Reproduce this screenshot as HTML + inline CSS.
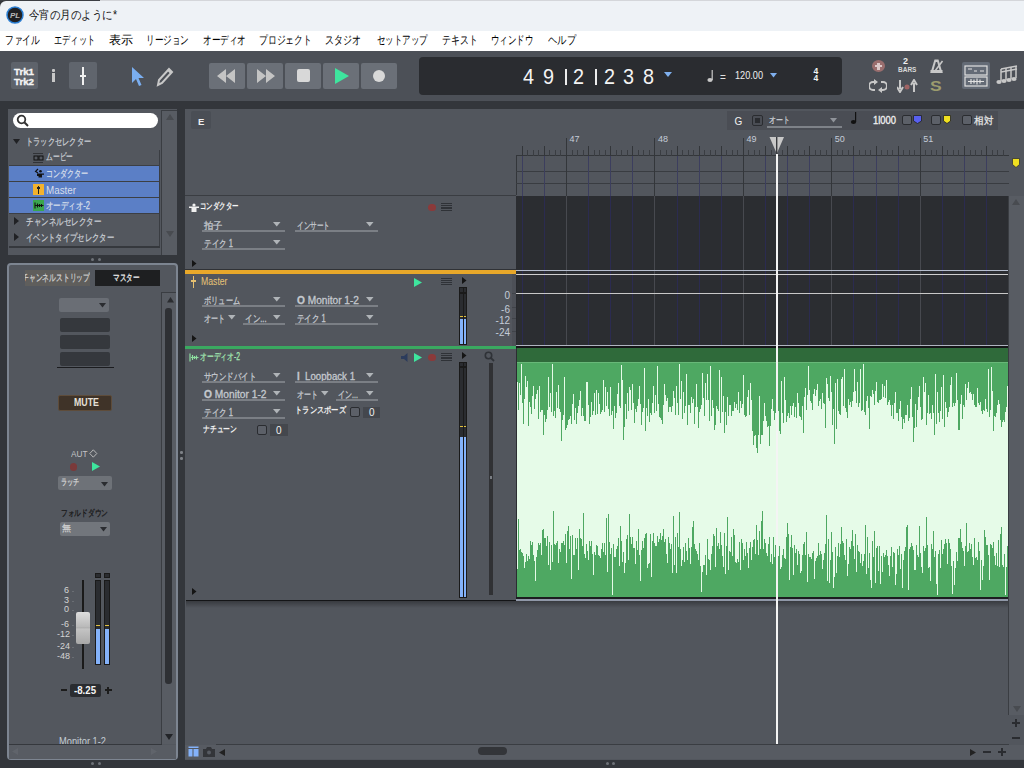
<!DOCTYPE html><html><head><meta charset="utf-8"><style>
*{margin:0;padding:0;box-sizing:border-box}
html,body{width:1024px;height:768px;overflow:hidden;background:#33363b;font-family:"Liberation Sans",sans-serif}
div,svg{position:absolute}
.t{white-space:nowrap;line-height:1}
</style></head><body>
<div style="left:0px;top:0px;width:1024px;height:1px;background:#d4d6da;"></div>
<div style="left:0px;top:0px;width:100px;height:1px;background:#3c3f44;"></div>
<div style="left:0px;top:1px;width:1024px;height:30px;background:#eef2f6;border-top-left-radius:6px;"></div>
<svg style="left:6px;top:6px" width="18" height="18"><circle cx="9" cy="9" r="8" fill="#1f2023" stroke="#2a7fd4" stroke-width="1.5"/><text x="9" y="12" font-size="8" font-weight="bold" font-style="italic" fill="#b8b8b8" text-anchor="middle" font-family="Liberation Sans">PL</text></svg>
<div class="t" id="w1" style="left:29px;top:9px;font-size:12px;color:#111;transform:scaleX(0.874);transform-origin:0 0;">今宵の月のように*</div>
<div style="left:0px;top:31px;width:1024px;height:20px;background:#ffffff;"></div>
<div class="t" id="w2" style="left:5px;top:34px;font-size:12px;color:#000;transform:scaleX(0.729);transform-origin:0 0;">ファイル</div>
<div class="t" id="w3" style="left:54px;top:34px;font-size:12px;color:#000;transform:scaleX(0.683);transform-origin:0 0;">エディット</div>
<div class="t" id="w4" style="left:109px;top:34px;font-size:12px;color:#000;transform:scaleX(1.000);transform-origin:0 0;">表示</div>
<div class="t" id="w5" style="left:146px;top:34px;font-size:12px;color:#000;transform:scaleX(0.717);transform-origin:0 0;">リージョン</div>
<div class="t" id="w6" style="left:202.5px;top:34px;font-size:12px;color:#000;transform:scaleX(0.717);transform-origin:0 0;">オーディオ</div>
<div class="t" id="w7" style="left:258.5px;top:34px;font-size:12px;color:#000;transform:scaleX(0.736);transform-origin:0 0;">プロジェクト</div>
<div class="t" id="w8" style="left:325px;top:34px;font-size:12px;color:#000;transform:scaleX(0.750);transform-origin:0 0;">スタジオ</div>
<div class="t" id="w9" style="left:377px;top:34px;font-size:12px;color:#000;transform:scaleX(0.708);transform-origin:0 0;">セットアップ</div>
<div class="t" id="w10" style="left:442px;top:34px;font-size:12px;color:#000;transform:scaleX(0.740);transform-origin:0 0;">テキスト</div>
<div class="t" id="w11" style="left:491px;top:34px;font-size:12px;color:#000;transform:scaleX(0.708);transform-origin:0 0;">ウィンドウ</div>
<div class="t" id="w12" style="left:547.5px;top:34px;font-size:12px;color:#000;transform:scaleX(0.778);transform-origin:0 0;">ヘルプ</div>
<div style="left:0px;top:51px;width:1024px;height:50px;background:#4c5057;"></div>
<div style="left:11px;top:62px;width:27px;height:27px;background:#5e636b;border-radius:2px;"></div>
<div class="t" id="w13" style="left:14px;top:67px;font-size:9.5px;color:#f4f4f4;transform:scaleX(1.023);transform-origin:0 0;font-weight:bold;-webkit-text-stroke-width:0.35px;">Trk1</div>
<div class="t" id="w14" style="left:14px;top:76.5px;font-size:9.5px;color:#f4f4f4;transform:scaleX(1.023);transform-origin:0 0;font-weight:bold;-webkit-text-stroke-width:0.35px;">Trk2</div>
<div style="left:52px;top:69px;width:3px;height:3px;background:#c8c8c8;border-radius:1px;"></div>
<div style="left:52px;top:73px;width:3px;height:9px;background:#c8c8c8;"></div>
<div style="left:69px;top:62px;width:28px;height:27px;background:#60656d;border-radius:2px;"></div>
<div style="left:82px;top:67px;width:2px;height:18px;background:#f0f0f0;"></div>
<div style="left:80px;top:75px;width:6px;height:2px;background:#f0f0f0;"></div>
<svg style="left:130px;top:66px" width="16" height="22"><path d="M2 1 L2 17 L6 13 L9 20 L11.5 19 L8.5 12 L14 12 Z" fill="#7aaef0"/></svg>
<svg style="left:155px;top:66px" width="20" height="22"><path d="M3 19 L4 14 L14 3 L17 6 L7 17 Z" fill="none" stroke="#c8c8c8" stroke-width="2"/><path d="M13 4 L16 7" stroke="#c8c8c8" stroke-width="2"/></svg>
<div style="left:209px;top:63px;width:36px;height:26px;background:#6b7078;border-radius:2px;"></div>
<div style="left:247px;top:63px;width:36px;height:26px;background:#6b7078;border-radius:2px;"></div>
<div style="left:285px;top:63px;width:36px;height:26px;background:#6b7078;border-radius:2px;"></div>
<div style="left:323px;top:63px;width:36px;height:26px;background:#6b7078;border-radius:2px;"></div>
<div style="left:361px;top:63px;width:36px;height:26px;background:#6b7078;border-radius:2px;"></div>
<svg style="left:209px;top:63px" width="36" height="26"><path d="M8 13 L17 6 L17 20 Z M17 13 L26 6 L26 20 Z" fill="#c4c4c4"/></svg>
<svg style="left:247px;top:63px" width="36" height="26"><path d="M28 13 L19 6 L19 20 Z M19 13 L10 6 L10 20 Z" fill="#c4c4c4"/></svg>
<div style="left:297px;top:69px;width:13px;height:13px;background:#d8d8d8;border-radius:2px;"></div>
<svg style="left:323px;top:63px" width="36" height="26"><path d="M12 5 L26 13 L12 21 Z" fill="#3ee59e"/></svg>
<div style="left:373px;top:70px;width:12px;height:12px;background:#d8d8d8;border-radius:50%;"></div>
<div style="left:419px;top:57px;width:423px;height:38px;background:#2a2c30;border-radius:4px;"></div>
<div class="t" style="left:523.2px;top:65.5px;font-size:22px;color:#f4f4f4;transform:scaleX(0.9);transform-origin:0 0;">4</div>
<div class="t" style="left:543.2px;top:65.5px;font-size:22px;color:#f4f4f4;transform:scaleX(0.9);transform-origin:0 0;">9</div>
<div class="t" style="left:573.2px;top:65.5px;font-size:22px;color:#f4f4f4;transform:scaleX(0.9);transform-origin:0 0;">2</div>
<div class="t" style="left:604.2px;top:65.5px;font-size:22px;color:#f4f4f4;transform:scaleX(0.9);transform-origin:0 0;">2</div>
<div class="t" style="left:623.2px;top:65.5px;font-size:22px;color:#f4f4f4;transform:scaleX(0.9);transform-origin:0 0;">3</div>
<div class="t" style="left:643.2px;top:65.5px;font-size:22px;color:#f4f4f4;transform:scaleX(0.9);transform-origin:0 0;">8</div>
<div style="left:564.5px;top:69px;width:2px;height:15.5px;background:#ececec;"></div>
<div style="left:594.5px;top:69px;width:2px;height:15.5px;background:#ececec;"></div>
<svg style="left:664px;top:72px" width="8" height="6"><path d="M0 0 L8 0 L4 5 Z" fill="#7fb0ee"/></svg>
<svg style="left:705px;top:69px" width="10" height="14"><ellipse cx="5" cy="11" rx="2.6" ry="2" fill="#c8c8c8"/><rect x="6.6" y="1" width="1.2" height="10" fill="#c8c8c8"/></svg>
<div class="t" style="left:720px;top:72.5px;font-size:10px;color:#e0e0e0;">=</div>
<div class="t" id="w15" style="left:734.5px;top:71px;font-size:10px;color:#f0f0f0;transform:scaleX(0.915);transform-origin:0 0;">120.00</div>
<svg style="left:770px;top:73px" width="8" height="5"><path d="M0 0 L7 0 L3.5 4.5 Z" fill="#7fb0ee"/></svg>
<div class="t" style="left:813.5px;top:67px;font-size:8.5px;color:#f4f4f4;font-weight:bold;">4</div>
<div class="t" style="left:813.5px;top:74px;font-size:8.5px;color:#f4f4f4;font-weight:bold;">4</div>
<div style="left:872px;top:60px;width:13px;height:12px;background:#9a6e6e;border-radius:50%;"></div>
<div style="left:877.2px;top:62.5px;width:2.6px;height:7px;background:#dccaca;"></div>
<div style="left:875px;top:64.7px;width:7px;height:2.6px;background:#dccaca;"></div>
<div class="t" style="left:903px;top:57px;font-size:9px;color:#f0f0f0;font-weight:bold;">2</div>
<div class="t" style="left:898px;top:67px;font-size:6.5px;color:#d8d8d8;font-weight:bold;">BARS</div>
<svg style="left:929px;top:58px" width="16" height="16"><path d="M1.5 15 L5.5 1.5 L9.5 1.5 L13.5 15 Z" fill="#c8c8c8"/><path d="M4.5 12 L6.8 4 L8.2 4 L10.5 12 Z" fill="#4c5057"/><path d="M6 13 L13.5 3" stroke="#c8c8c8" stroke-width="1.6"/><rect x="1.5" y="12" width="12" height="3" fill="#c8c8c8"/></svg>
<svg style="left:869px;top:79px" width="18" height="14"><path d="M7 3 L4 3 A4 4 0 0 0 4 11 L6 11 M11 11 L14 11 A4 4 0 0 0 14 3 L12 3" fill="none" stroke="#c8c8c8" stroke-width="2"/><path d="M5 0 L9 3 L5 6 Z M13 8 L9 11 L13 14 Z" fill="#c8c8c8"/></svg>
<svg style="left:897px;top:79px" width="22" height="14"><path d="M3 1 L3 10 M0 8 L3 13 L6 8" stroke="#c8c8c8" stroke-width="2" fill="none"/><circle cx="10" cy="8" r="2.5" fill="#a06464"/><path d="M17 13 L17 4 M14 6 L17 1 L20 6" stroke="#c8c8c8" stroke-width="2" fill="none"/></svg>
<div class="t" style="left:929.5px;top:79px;font-size:14px;color:#9c9c6e;font-weight:bold;transform:scaleX(1.25);transform-origin:0 0;">S</div>
<div style="left:962px;top:62px;width:28px;height:27px;background:#646b76;border-radius:2px;"></div>
<svg style="left:964px;top:65px" width="24" height="22"><rect x="1" y="1" width="22" height="9" fill="none" stroke="#e0e0e0" stroke-width="1.2"/><rect x="1" y="12" width="22" height="9" fill="none" stroke="#e0e0e0" stroke-width="1.2"/><path d="M4 4 L8 4 M10 6 L13 6 M16 6 L20 6" stroke="#e0e0e0" stroke-width="1.2"/><path d="M4 16.5 L20 16.5 M7 14 L7 19 M10 14.5 L10 18.5 M13 13.5 L13 19.5 M16 14.5 L16 18.5" stroke="#e0e0e0" stroke-width="1.2"/></svg>
<svg style="left:995px;top:64px" width="24" height="22"><path d="M6 5 L22 2 M6 8 L22 5" stroke="#c8c8c8" stroke-width="1.5"/><path d="M6 5 L6 17 M11 4 L11 16 M16 3 L16 15 M21 2 L21 14" stroke="#c8c8c8" stroke-width="1.5"/><ellipse cx="4" cy="18" rx="2.6" ry="2" fill="#c8c8c8"/><ellipse cx="9" cy="17" rx="2.6" ry="2" fill="#c8c8c8"/><ellipse cx="14" cy="16" rx="2.6" ry="2" fill="#c8c8c8"/><ellipse cx="19" cy="15" rx="2.6" ry="2" fill="#c8c8c8"/></svg>
<div style="left:8px;top:109px;width:169px;height:146px;background:#53575e;"></div>
<div style="left:13px;top:113px;width:145px;height:15px;background:#ffffff;border-radius:8px;"></div>
<svg style="left:16px;top:114px" width="14" height="14"><circle cx="5.5" cy="5.5" r="3.8" fill="none" stroke="#333" stroke-width="1.8"/><path d="M8.3 8.3 L12 12" stroke="#333" stroke-width="2"/></svg>
<div style="left:161px;top:110px;width:1px;height:145px;background:#3a3d42;"></div>
<div style="left:162px;top:110px;width:15px;height:145px;background:#585c63;"></div>
<div style="left:162px;top:110px;width:15px;height:1px;background:#3a3d42;"></div>
<svg style="left:166px;top:114px" width="8" height="7"><path d="M0 6 L4 0 L8 6 Z" fill="#484b50"/></svg>
<svg style="left:166px;top:231px" width="8" height="7"><path d="M0 0 L8 0 L4 6 Z" fill="#484b50"/></svg>
<svg style="left:13px;top:139px" width="7" height="6"><path d="M0 0 L7 0 L3.5 5 Z" fill="#202124"/></svg>
<div class="t" id="w16" style="left:26px;top:137px;font-size:10px;color:#c8ccd2;transform:scaleX(0.722);transform-origin:0 0;-webkit-text-stroke-width:0.25px;">トラックセレクター</div>
<div style="left:159px;top:150px;width:1px;height:97px;background:#3a3d42;"></div>
<div class="t" id="w17" style="left:46px;top:152px;font-size:10px;color:#c8ccd2;transform:scaleX(0.675);transform-origin:0 0;-webkit-text-stroke-width:0.25px;">ムービー</div>
<svg style="left:33px;top:153px" width="11" height="10"><path d="M0.5 0.5 H10.5 M0.5 9.5 H10.5" stroke="#111" stroke-dasharray="1,1"/><rect x="1" y="3" width="4" height="4" fill="none" stroke="#111"/><rect x="6" y="3" width="4" height="4" fill="none" stroke="#111"/></svg>
<div style="left:9px;top:165px;width:151px;height:1px;background:#3c3f44;"></div>
<div style="left:9px;top:166px;width:150px;height:15px;background:#5b7fc6;"></div>
<div style="left:9px;top:181px;width:150px;height:1px;background:#3c3f44;"></div>
<div class="t" id="w18" style="left:46px;top:169px;font-size:10px;color:#d6deea;transform:scaleX(0.708);transform-origin:0 0;-webkit-text-stroke-width:0.25px;">コンダクター</div>
<div style="left:9px;top:182px;width:150px;height:15px;background:#5b7fc6;"></div>
<div style="left:9px;top:197px;width:150px;height:1px;background:#3c3f44;"></div>
<div class="t" id="w19" style="left:46px;top:186px;font-size:10px;color:#d6deea;transform:scaleX(0.982);transform-origin:0 0;">Master</div>
<div style="left:9px;top:198px;width:150px;height:15px;background:#5b7fc6;"></div>
<div style="left:9px;top:213px;width:150px;height:1px;background:#3c3f44;"></div>
<div class="t" id="w20" style="left:46px;top:201px;font-size:10px;color:#d6deea;transform:scaleX(0.747);transform-origin:0 0;-webkit-text-stroke-width:0.25px;">オーディオ-2</div>
<svg style="left:34px;top:168px" width="11" height="11"><path d="M4 1 L1.5 3.5 L4 5" stroke="#111" stroke-width="1.1" fill="none"/><circle cx="6.5" cy="3.2" r="1.3" fill="#111"/><path d="M3 5.5 L10 5.5 L10 6.8 L8 6.8 L8 9.5 L4.5 9.5 L4.5 8 L3 8 Z" fill="#111"/></svg>
<div style="left:33px;top:184px;width:11px;height:11px;background:#f3b22e;"></div>
<div style="left:38px;top:186px;width:1.2px;height:8px;background:#222;"></div>
<div style="left:37px;top:187px;width:3.2px;height:1.5px;background:#222;"></div>
<div style="left:33px;top:200px;width:11px;height:11px;background:#3aa64e;"></div>
<svg style="left:34px;top:201px" width="10" height="9"><path d="M1 1.5 L1 7.5 M1.5 4.5 L9.5 4.5 M3.5 2.5 L3.5 6.5 M5.5 3 L5.5 6 M7.5 3 L7.5 6" stroke="#111" stroke-width="1.1"/></svg>
<svg style="left:14px;top:217px" width="5" height="8"><path d="M0 0 L5 4 L0 8 Z" fill="#202124"/></svg>
<div class="t" id="w21" style="left:26px;top:216.5px;font-size:10px;color:#c8ccd2;transform:scaleX(0.750);transform-origin:0 0;-webkit-text-stroke-width:0.25px;">チャンネルセレクター</div>
<svg style="left:14px;top:233px" width="5" height="8"><path d="M0 0 L5 4 L0 8 Z" fill="#202124"/></svg>
<div class="t" id="w22" style="left:26px;top:232.5px;font-size:10px;color:#c8ccd2;transform:scaleX(0.733);transform-origin:0 0;-webkit-text-stroke-width:0.25px;">イベントタイプセレクター</div>
<div style="left:9px;top:246px;width:151px;height:2px;background:#35383d;"></div>
<div style="left:90.5px;top:258px;width:3px;height:3px;background:#6e7278;border-radius:50%;"></div>
<div style="left:98px;top:258px;width:3px;height:3px;background:#6e7278;border-radius:50%;"></div>
<div style="left:7px;top:263px;width:171px;height:497px;background:#53575e;border:2px solid #7d8591;border-radius:4px;"></div>
<div style="left:25px;top:270px;width:65px;height:16px;background:#5f5e5c;"></div>
<div style="left:25px;top:270px;width:65px;height:16px;overflow:hidden">
<div class="t" id="w23" style="left:-3px;top:3px;font-size:10px;color:#d0d0d0;transform:scaleX(0.680);transform-origin:0 0;-webkit-text-stroke-width:0.25px;">チャンネルストリップ</div>
</div>
<div style="left:95px;top:270px;width:65px;height:16px;background:#1e1f21;"></div>
<div class="t" id="w24" style="left:113px;top:273px;font-size:10px;color:#f0f0f0;transform:scaleX(0.662);transform-origin:0 0;-webkit-text-stroke-width:0.25px;">マスター</div>
<div style="left:161px;top:292px;width:1px;height:452px;background:#3a3d42;"></div>
<div style="left:162px;top:292px;width:14px;height:452px;background:#585c63;"></div>
<div style="left:161px;top:292px;width:15px;height:1px;background:#3a3d42;"></div>
<svg style="left:166.5px;top:296.5px" width="7" height="6"><path d="M0 5.5 L3.5 0 L7 5.5 Z" fill="#2a2c30"/></svg>
<div style="left:165px;top:308px;width:7px;height:376px;background:#2e3034;border-radius:3px;"></div>
<svg style="left:165px;top:734px" width="8" height="7"><path d="M0 0 L8 0 L4 6 Z" fill="#222428"/></svg>
<div style="left:59px;top:298px;width:50px;height:14px;background:#6a6e75;border-radius:2px;"></div>
<svg style="left:99px;top:303px" width="7" height="5"><path d="M0 0 L7 0 L3.5 4.5 Z" fill="#2a2c30"/></svg>
<div style="left:60px;top:318px;width:50px;height:14px;background:#35383d;border-radius:2px;"></div>
<div style="left:60px;top:335px;width:50px;height:14px;background:#35383d;border-radius:2px;"></div>
<div style="left:60px;top:352px;width:50px;height:14px;background:#35383d;border-radius:2px;"></div>
<div style="left:57px;top:367px;width:57px;height:1px;background:#1b1c1f;"></div>
<div style="left:58px;top:395px;width:54px;height:16px;background:#3f3328;border:1px solid #5e4c3a;border-radius:2px;"></div>
<div class="t" id="w25" style="left:74px;top:398px;font-size:10px;color:#e6e0d8;transform:scaleX(0.882);transform-origin:0 0;font-weight:bold;">MUTE</div>
<div class="t" id="w26" style="left:71px;top:448.5px;font-size:9.5px;color:#c4c4c4;transform:scaleX(0.868);transform-origin:0 0;">AUT</div>
<svg style="left:88.5px;top:448.5px" width="9" height="9"><path d="M4.3 0.8 L7.8 4.5 L4.3 8.2 L0.8 4.5 Z" fill="none" stroke="#c4c4c4" stroke-width="0.9"/></svg>
<div style="left:69.5px;top:463px;width:7.5px;height:7.5px;background:#7a3a3a;border-radius:50%;"></div>
<svg style="left:92px;top:462px" width="8" height="9"><path d="M0 0 L8 4.5 L0 9 Z" fill="#3ee59e"/></svg>
<div style="left:58px;top:476px;width:54px;height:14px;background:#6e7278;border-radius:2px;"></div>
<div class="t" id="w27" style="left:61px;top:478px;font-size:9px;color:#d8d8d8;transform:scaleX(0.685);transform-origin:0 0;-webkit-text-stroke-width:0.25px;">ラッチ</div>
<svg style="left:101px;top:482px" width="7" height="5"><path d="M0 0 L7 0 L3.5 4.5 Z" fill="#2a2c30"/></svg>
<div class="t" id="w28" style="left:61px;top:509px;font-size:9px;color:#151515;transform:scaleX(0.746);transform-origin:0 0;-webkit-text-stroke-width:0.25px;">フォルドダウン</div>
<div style="left:60px;top:522px;width:50px;height:14px;background:#72767c;border-radius:2px;"></div>
<div class="t" style="left:62px;top:524px;font-size:9px;color:#d0d0d0;-webkit-text-stroke-width:0.25px;">無</div>
<svg style="left:100px;top:527px" width="7" height="5"><path d="M0 0 L7 0 L3.5 4.5 Z" fill="#2a2c30"/></svg>
<div class="t" style="left:64px;top:586px;font-size:9px;color:#d4d4d4;width:12px;text-align:right;left:57px;">6</div>
<div style="left:72px;top:590.5px;width:1.5px;height:1px;background:#6a6e74;"></div>
<div class="t" style="left:64px;top:596px;font-size:9px;color:#d4d4d4;width:12px;text-align:right;left:57px;">3</div>
<div style="left:72px;top:600.5px;width:1.5px;height:1px;background:#6a6e74;"></div>
<div class="t" style="left:64px;top:605px;font-size:9px;color:#d4d4d4;width:12px;text-align:right;left:57px;">0</div>
<div style="left:72px;top:609.5px;width:1.5px;height:1px;background:#6a6e74;"></div>
<div class="t" style="left:61px;top:620px;font-size:9px;color:#d4d4d4;width:12px;text-align:right;left:57px;">-6</div>
<div style="left:72px;top:624.5px;width:1.5px;height:1px;background:#6a6e74;"></div>
<div class="t" style="left:57px;top:630px;font-size:9px;color:#d4d4d4;width:12px;text-align:right;left:57px;">-12</div>
<div style="left:72px;top:634.5px;width:1.5px;height:1px;background:#6a6e74;"></div>
<div class="t" style="left:57px;top:642px;font-size:9px;color:#d4d4d4;width:12px;text-align:right;left:57px;">-24</div>
<div style="left:72px;top:646.5px;width:1.5px;height:1px;background:#6a6e74;"></div>
<div class="t" style="left:57px;top:652px;font-size:9px;color:#d4d4d4;width:12px;text-align:right;left:57px;">-48</div>
<div style="left:72px;top:656.5px;width:1.5px;height:1px;background:#6a6e74;"></div>
<div style="left:82px;top:580px;width:1.5px;height:89px;background:#1a1a1a;"></div>
<div style="left:76px;top:612px;width:14px;height:32px;background:linear-gradient(#dedede,#b8b8b8 48%,#9a9a9a 50%,#c4c4c4 52%,#a8a8a8);border-radius:2px;"></div>
<div style="left:95px;top:573px;width:6px;height:5px;background:#2a2c30;border:1px solid #1a1a1a;"></div>
<div style="left:95px;top:580px;width:6px;height:85px;background:#2a2c30;border:1px solid #1a1a1a;"></div>
<div style="left:96px;top:629px;width:4px;height:35px;background:#84b2fa;"></div>
<div style="left:96px;top:625px;width:4px;height:1px;background:#e0c040;"></div>
<div style="left:104px;top:573px;width:6px;height:5px;background:#2a2c30;border:1px solid #1a1a1a;"></div>
<div style="left:104px;top:580px;width:6px;height:85px;background:#2a2c30;border:1px solid #1a1a1a;"></div>
<div style="left:105px;top:629px;width:4px;height:35px;background:#84b2fa;"></div>
<div style="left:105px;top:625px;width:4px;height:1px;background:#e0c040;"></div>
<div style="left:70px;top:684px;width:31px;height:13px;background:#2a2c30;border-radius:2px;"></div>
<div class="t" id="w29" style="left:73.5px;top:686px;font-size:10px;color:#f4f4f4;transform:scaleX(0.965);transform-origin:0 0;font-weight:bold;">-8.25</div>
<div style="left:61px;top:689px;width:5.5px;height:2px;background:#1c1c1c;"></div>
<div style="left:105px;top:689.3px;width:6.5px;height:2px;background:#1c1c1c;"></div>
<div style="left:107.3px;top:687px;width:2px;height:6.5px;background:#1c1c1c;"></div>
<div class="t" id="w30" style="left:59px;top:736.5px;font-size:10px;color:#c4ccd4;transform:scaleX(0.929);transform-origin:0 0;">Monitor 1-2</div>
<div style="left:9px;top:744px;width:153px;height:1px;background:#35383d;"></div>
<div style="left:9px;top:745px;width:167px;height:14px;background:#585c63;"></div>
<svg style="left:12px;top:748px" width="6" height="7"><path d="M6 0 L0 3.5 L6 7 Z" fill="#60646b"/></svg>
<svg style="left:151px;top:748px" width="6" height="7"><path d="M0 0 L6 3.5 L0 7 Z" fill="#60646b"/></svg>
<div style="left:90.5px;top:762px;width:3px;height:3px;background:#6e7278;border-radius:50%;"></div>
<div style="left:98px;top:762px;width:3px;height:3px;background:#6e7278;border-radius:50%;"></div>
<div style="left:185px;top:109px;width:839px;height:651px;background:#52565d;"></div>
<div style="left:191px;top:111px;width:20px;height:18px;background:#4a4e55;border-radius:2px;"></div>
<div class="t" style="left:198px;top:117px;font-size:9.5px;color:#f0f0f0;font-weight:bold;">E</div>
<div style="left:185px;top:195px;width:331px;height:1px;background:#3a3d42;"></div>
<div style="left:727px;top:111px;width:271px;height:19px;background:#4a4d54;"></div>
<div class="t" style="left:734.5px;top:116.5px;font-size:10px;color:#f0f0f0;">G</div>
<div style="left:752px;top:115px;width:11px;height:11px;background:#4a4d54;border:1.5px solid #2a2c30;border-radius:2px;"></div>
<div style="left:755px;top:118px;width:5px;height:5px;background:#2a2c30;"></div>
<div class="t" id="w31" style="left:769px;top:116px;font-size:9px;color:#c8ccd2;transform:scaleX(0.778);transform-origin:0 0;-webkit-text-stroke-width:0.25px;">オート</div>
<div style="left:767px;top:126px;width:75px;height:1.5px;background:#7e8288;"></div>
<svg style="left:830px;top:118px" width="7" height="5"><path d="M0 0 L7 0 L3.5 4.5 Z" fill="#90949a"/></svg>
<svg style="left:850px;top:112px" width="8" height="12"><ellipse cx="3.5" cy="10" rx="2.6" ry="2" fill="#111"/><rect x="5" y="0" width="1.2" height="10" fill="#111"/></svg>
<div class="t" id="w32" style="left:873px;top:116px;font-size:10px;color:#f0f0f0;transform:scaleX(0.940);transform-origin:0 0;-webkit-text-stroke-width:0.3px;">1l000</div>
<div style="left:902px;top:115px;width:10px;height:10px;background:#5c6068;border:1px solid #2a2c30;border-radius:2px;"></div>
<div style="left:931px;top:115px;width:10px;height:10px;background:#5c6068;border:1px solid #2a2c30;border-radius:2px;"></div>
<div style="left:962px;top:115px;width:10px;height:10px;background:#5c6068;border:1px solid #2a2c30;border-radius:2px;"></div>
<svg style="left:913px;top:115px" width="9" height="9"><path d="M0.5 0.5 L8.5 0.5 L8.5 6 L4.5 8.5 L0.5 6 Z" fill="#5860f0" stroke="#222" stroke-width="0.8"/></svg>
<svg style="left:943px;top:115px" width="8" height="9"><path d="M0.5 0.5 L7.5 0.5 L7.5 6 L4 8.5 L0.5 6 Z" fill="#f0e020" stroke="#222" stroke-width="0.8"/></svg>
<div class="t" id="w33" style="left:974px;top:116px;font-size:10px;color:#e8e8e8;transform:scaleX(0.950);transform-origin:0 0;-webkit-text-stroke-width:0.25px;">相対</div>
<svg style="left:516px;top:130px" width="508" height="70"><rect x="0" y="25" width="493" height="1" fill="#33363a"/><rect x="0" y="25" width="1" height="40" fill="#33363a"/><rect x="0" y="41" width="493" height="1" fill="#393c41"/><rect x="0" y="53" width="493" height="1" fill="#393c41"/><rect x="6" y="16" width="1" height="10" fill="#33363a"/><rect x="6" y="26" width="1" height="40" fill="#3c3e5e"/><rect x="11" y="20" width="1" height="6" fill="#3a3d42"/><rect x="17" y="20" width="1" height="6" fill="#3a3d42"/><rect x="22" y="20" width="1" height="6" fill="#3a3d42"/><rect x="28" y="16" width="1" height="10" fill="#33363a"/><rect x="28" y="26" width="1" height="40" fill="#3c3e5e"/><rect x="33" y="20" width="1" height="6" fill="#3a3d42"/><rect x="39" y="20" width="1" height="6" fill="#3a3d42"/><rect x="44" y="20" width="1" height="6" fill="#3a3d42"/><rect x="50" y="8" width="1" height="58" fill="#33363a"/><rect x="56" y="20" width="1" height="6" fill="#3a3d42"/><rect x="61" y="20" width="1" height="6" fill="#3a3d42"/><rect x="67" y="20" width="1" height="6" fill="#3a3d42"/><rect x="72" y="16" width="1" height="10" fill="#33363a"/><rect x="72" y="26" width="1" height="40" fill="#3c3e5e"/><rect x="78" y="20" width="1" height="6" fill="#3a3d42"/><rect x="83" y="20" width="1" height="6" fill="#3a3d42"/><rect x="89" y="20" width="1" height="6" fill="#3a3d42"/><rect x="94" y="16" width="1" height="10" fill="#33363a"/><rect x="94" y="26" width="1" height="40" fill="#3c3e5e"/><rect x="100" y="20" width="1" height="6" fill="#3a3d42"/><rect x="105" y="20" width="1" height="6" fill="#3a3d42"/><rect x="111" y="20" width="1" height="6" fill="#3a3d42"/><rect x="116" y="16" width="1" height="10" fill="#33363a"/><rect x="116" y="26" width="1" height="40" fill="#3c3e5e"/><rect x="122" y="20" width="1" height="6" fill="#3a3d42"/><rect x="127" y="20" width="1" height="6" fill="#3a3d42"/><rect x="133" y="20" width="1" height="6" fill="#3a3d42"/><rect x="138" y="8" width="1" height="58" fill="#33363a"/><rect x="144" y="20" width="1" height="6" fill="#3a3d42"/><rect x="150" y="20" width="1" height="6" fill="#3a3d42"/><rect x="155" y="20" width="1" height="6" fill="#3a3d42"/><rect x="161" y="16" width="1" height="10" fill="#33363a"/><rect x="161" y="26" width="1" height="40" fill="#3c3e5e"/><rect x="166" y="20" width="1" height="6" fill="#3a3d42"/><rect x="172" y="20" width="1" height="6" fill="#3a3d42"/><rect x="177" y="20" width="1" height="6" fill="#3a3d42"/><rect x="183" y="16" width="1" height="10" fill="#33363a"/><rect x="183" y="26" width="1" height="40" fill="#3c3e5e"/><rect x="188" y="20" width="1" height="6" fill="#3a3d42"/><rect x="194" y="20" width="1" height="6" fill="#3a3d42"/><rect x="199" y="20" width="1" height="6" fill="#3a3d42"/><rect x="205" y="16" width="1" height="10" fill="#33363a"/><rect x="205" y="26" width="1" height="40" fill="#3c3e5e"/><rect x="210" y="20" width="1" height="6" fill="#3a3d42"/><rect x="216" y="20" width="1" height="6" fill="#3a3d42"/><rect x="221" y="20" width="1" height="6" fill="#3a3d42"/><rect x="227" y="8" width="1" height="58" fill="#33363a"/><rect x="232" y="20" width="1" height="6" fill="#3a3d42"/><rect x="238" y="20" width="1" height="6" fill="#3a3d42"/><rect x="243" y="20" width="1" height="6" fill="#3a3d42"/><rect x="249" y="16" width="1" height="10" fill="#33363a"/><rect x="249" y="26" width="1" height="40" fill="#3c3e5e"/><rect x="255" y="20" width="1" height="6" fill="#3a3d42"/><rect x="260" y="20" width="1" height="6" fill="#3a3d42"/><rect x="266" y="20" width="1" height="6" fill="#3a3d42"/><rect x="271" y="16" width="1" height="10" fill="#33363a"/><rect x="271" y="26" width="1" height="40" fill="#3c3e5e"/><rect x="277" y="20" width="1" height="6" fill="#3a3d42"/><rect x="282" y="20" width="1" height="6" fill="#3a3d42"/><rect x="288" y="20" width="1" height="6" fill="#3a3d42"/><rect x="293" y="16" width="1" height="10" fill="#33363a"/><rect x="293" y="26" width="1" height="40" fill="#3c3e5e"/><rect x="299" y="20" width="1" height="6" fill="#3a3d42"/><rect x="304" y="20" width="1" height="6" fill="#3a3d42"/><rect x="310" y="20" width="1" height="6" fill="#3a3d42"/><rect x="315" y="8" width="1" height="58" fill="#33363a"/><rect x="321" y="20" width="1" height="6" fill="#3a3d42"/><rect x="326" y="20" width="1" height="6" fill="#3a3d42"/><rect x="332" y="20" width="1" height="6" fill="#3a3d42"/><rect x="337" y="16" width="1" height="10" fill="#33363a"/><rect x="337" y="26" width="1" height="40" fill="#3c3e5e"/><rect x="343" y="20" width="1" height="6" fill="#3a3d42"/><rect x="349" y="20" width="1" height="6" fill="#3a3d42"/><rect x="354" y="20" width="1" height="6" fill="#3a3d42"/><rect x="360" y="16" width="1" height="10" fill="#33363a"/><rect x="360" y="26" width="1" height="40" fill="#3c3e5e"/><rect x="365" y="20" width="1" height="6" fill="#3a3d42"/><rect x="371" y="20" width="1" height="6" fill="#3a3d42"/><rect x="376" y="20" width="1" height="6" fill="#3a3d42"/><rect x="382" y="16" width="1" height="10" fill="#33363a"/><rect x="382" y="26" width="1" height="40" fill="#3c3e5e"/><rect x="387" y="20" width="1" height="6" fill="#3a3d42"/><rect x="393" y="20" width="1" height="6" fill="#3a3d42"/><rect x="398" y="20" width="1" height="6" fill="#3a3d42"/><rect x="404" y="8" width="1" height="58" fill="#33363a"/><rect x="409" y="20" width="1" height="6" fill="#3a3d42"/><rect x="415" y="20" width="1" height="6" fill="#3a3d42"/><rect x="420" y="20" width="1" height="6" fill="#3a3d42"/><rect x="426" y="16" width="1" height="10" fill="#33363a"/><rect x="426" y="26" width="1" height="40" fill="#3c3e5e"/><rect x="431" y="20" width="1" height="6" fill="#3a3d42"/><rect x="437" y="20" width="1" height="6" fill="#3a3d42"/><rect x="442" y="20" width="1" height="6" fill="#3a3d42"/><rect x="448" y="16" width="1" height="10" fill="#33363a"/><rect x="448" y="26" width="1" height="40" fill="#3c3e5e"/><rect x="454" y="20" width="1" height="6" fill="#3a3d42"/><rect x="459" y="20" width="1" height="6" fill="#3a3d42"/><rect x="465" y="20" width="1" height="6" fill="#3a3d42"/><rect x="470" y="16" width="1" height="10" fill="#33363a"/><rect x="470" y="26" width="1" height="40" fill="#3c3e5e"/><rect x="476" y="20" width="1" height="6" fill="#3a3d42"/><rect x="481" y="20" width="1" height="6" fill="#3a3d42"/><rect x="487" y="20" width="1" height="6" fill="#3a3d42"/></svg>
<div class="t" style="left:569.5px;top:135px;font-size:9px;color:#c4ccd8;">47</div>
<div class="t" style="left:657.95px;top:135px;font-size:9px;color:#c4ccd8;">48</div>
<div class="t" style="left:746.4px;top:135px;font-size:9px;color:#c4ccd8;">49</div>
<div class="t" style="left:834.85px;top:135px;font-size:9px;color:#c4ccd8;">50</div>
<div class="t" style="left:923.3px;top:135px;font-size:9px;color:#c4ccd8;">51</div>
<svg style="left:1012px;top:158px" width="8" height="10"><path d="M0.5 0.5 L7.5 0.5 L7.5 6.5 L4 9.5 L0.5 6.5 Z" fill="#f0e020" stroke="#333" stroke-width="0.8"/></svg>
<div style="left:516px;top:196px;width:492px;height:404px;background:#2b2d31;"></div>
<svg style="left:516px;top:196px" width="492" height="404"><rect x="6" y="0" width="1" height="404" fill="#2b2b50"/><rect x="28" y="0" width="1" height="404" fill="#2b2b50"/><rect x="50" y="0" width="1" height="404" fill="#47494f"/><rect x="72" y="0" width="1" height="404" fill="#2b2b50"/><rect x="94" y="0" width="1" height="404" fill="#2b2b50"/><rect x="116" y="0" width="1" height="404" fill="#2b2b50"/><rect x="138" y="0" width="1" height="404" fill="#47494f"/><rect x="161" y="0" width="1" height="404" fill="#2b2b50"/><rect x="183" y="0" width="1" height="404" fill="#2b2b50"/><rect x="205" y="0" width="1" height="404" fill="#2b2b50"/><rect x="227" y="0" width="1" height="404" fill="#47494f"/><rect x="249" y="0" width="1" height="404" fill="#2b2b50"/><rect x="271" y="0" width="1" height="404" fill="#2b2b50"/><rect x="293" y="0" width="1" height="404" fill="#2b2b50"/><rect x="315" y="0" width="1" height="404" fill="#47494f"/><rect x="337" y="0" width="1" height="404" fill="#2b2b50"/><rect x="360" y="0" width="1" height="404" fill="#2b2b50"/><rect x="382" y="0" width="1" height="404" fill="#2b2b50"/><rect x="404" y="0" width="1" height="404" fill="#47494f"/><rect x="426" y="0" width="1" height="404" fill="#2b2b50"/><rect x="448" y="0" width="1" height="404" fill="#2b2b50"/><rect x="470" y="0" width="1" height="404" fill="#2b2b50"/></svg>
<div style="left:516px;top:270px;width:492px;height:1px;background:#b4bccc;"></div>
<div style="left:516px;top:274px;width:492px;height:1.2px;background:#cfcfcf;"></div>
<div style="left:516px;top:292.5px;width:492px;height:1.5px;background:#c8c8c8;"></div>
<div style="left:516px;top:345px;width:492px;height:1.2px;background:#b0b4c0;"></div>
<div style="left:516px;top:346.3px;width:492px;height:1.7px;background:#151618;"></div>
<div style="left:185px;top:196px;width:331px;height:74px;background:#52565d;"></div>
<div style="left:185px;top:270px;width:331px;height:4px;background:#e8a82a;"></div>
<div style="left:185px;top:269px;width:331px;height:1px;background:#303236;"></div>
<div style="left:185px;top:274px;width:331px;height:72px;background:#52565d;"></div>
<div style="left:185px;top:346px;width:331px;height:3px;background:#3aa860;"></div>
<div style="left:185px;top:349px;width:331px;height:251px;background:#52565d;"></div>
<div style="left:186px;top:599.5px;width:330px;height:1.7px;background:#141517;"></div>
<div style="left:186px;top:601px;width:822px;height:7px;background:linear-gradient(rgba(0,0,0,0.32),rgba(0,0,0,0));"></div>
<svg style="left:189px;top:203px" width="10" height="9"><circle cx="5" cy="2" r="1.6" fill="#f0f0f0"/><path d="M0 3.5 L10 3.5 L10 5 L7.5 5 L7.5 9 L2.5 9 L2.5 5 L0 5 Z" fill="#f0f0f0"/></svg>
<div class="t" id="w34" style="left:200px;top:202px;font-size:9px;color:#f4f4f4;transform:scaleX(0.717);transform-origin:0 0;font-weight:bold;">コンダクター</div>
<div style="left:428px;top:203.5px;width:7.5px;height:7.5px;background:#8b3a3a;border-radius:50%;"></div>
<div style="left:440.5px;top:203.0px;width:11px;height:1.3px;background:#2f3237;"></div>
<div style="left:440.5px;top:205.2px;width:11px;height:1.3px;background:#2f3237;"></div>
<div style="left:440.5px;top:207.4px;width:11px;height:1.3px;background:#2f3237;"></div>
<div style="left:440.5px;top:209.6px;width:11px;height:1.3px;background:#2f3237;"></div>
<div class="t" id="w35" style="left:204px;top:220.5px;font-size:10px;color:#c4c8ce;transform:scaleX(0.925);transform-origin:0 0;-webkit-text-stroke:0.3px #c4c8ce;">拍子</div>
<div style="left:202px;top:230px;width:83px;height:2px;background:#7b7f85;"></div>
<svg style="left:273px;top:222px" width="8" height="5"><path d="M0 0 L7.5 0 L3.75 4.5 Z" fill="#b0b4b8"/></svg>
<div class="t" id="w36" style="left:297px;top:220.5px;font-size:10px;color:#c4c8ce;transform:scaleX(0.660);transform-origin:0 0;-webkit-text-stroke:0.3px #c4c8ce;">インサート</div>
<div style="left:295px;top:230px;width:83px;height:2px;background:#7b7f85;"></div>
<svg style="left:366px;top:222px" width="8" height="5"><path d="M0 0 L7.5 0 L3.75 4.5 Z" fill="#b0b4b8"/></svg>
<div class="t" id="w37" style="left:204px;top:238.5px;font-size:10px;color:#c4c8ce;transform:scaleX(0.756);transform-origin:0 0;-webkit-text-stroke:0.3px #c4c8ce;">テイク 1</div>
<div style="left:202px;top:248px;width:83px;height:2px;background:#7b7f85;"></div>
<svg style="left:273px;top:240px" width="8" height="5"><path d="M0 0 L7.5 0 L3.75 4.5 Z" fill="#b0b4b8"/></svg>
<svg style="left:192px;top:260px" width="5" height="7"><path d="M0 0 L4.5 3.5 L0 7 Z" fill="#151515"/></svg>
<div style="left:192.5px;top:276px;width:1.5px;height:12px;background:#e6c070;"></div>
<div style="left:191px;top:280px;width:4.5px;height:1.5px;background:#e6c070;"></div>
<div class="t" id="w38" style="left:200.5px;top:277px;font-size:10px;color:#e8c476;transform:scaleX(0.867);transform-origin:0 0;">Master</div>
<svg style="left:414px;top:278px" width="8" height="9"><path d="M0 0 L8 4.5 L0 9 Z" fill="#3ee59e"/></svg>
<div style="left:440.5px;top:277.5px;width:11px;height:1.3px;background:#2f3237;"></div>
<div style="left:440.5px;top:279.7px;width:11px;height:1.3px;background:#2f3237;"></div>
<div style="left:440.5px;top:281.9px;width:11px;height:1.3px;background:#2f3237;"></div>
<div style="left:440.5px;top:284.1px;width:11px;height:1.3px;background:#2f3237;"></div>
<svg style="left:462px;top:277px" width="5" height="7"><path d="M0 0 L4.5 3.5 L0 7 Z" fill="#151515"/></svg>
<div class="t" id="w39" style="left:204px;top:295.5px;font-size:10px;color:#c4c8ce;transform:scaleX(0.720);transform-origin:0 0;-webkit-text-stroke:0.3px #c4c8ce;">ボリューム</div>
<div style="left:202px;top:305px;width:83px;height:2px;background:#7b7f85;"></div>
<svg style="left:273px;top:297px" width="8" height="5"><path d="M0 0 L7.5 0 L3.75 4.5 Z" fill="#b0b4b8"/></svg>
<div class="t" id="w40" style="left:297px;top:295.5px;font-size:10px;color:#c4c8ce;transform:scaleX(1.014);transform-origin:0 0;-webkit-text-stroke:0.3px #c4c8ce;"><b>O</b> Monitor 1-2</div>
<div style="left:295px;top:305px;width:83px;height:2px;background:#7b7f85;"></div>
<svg style="left:366px;top:297px" width="8" height="5"><path d="M0 0 L7.5 0 L3.75 4.5 Z" fill="#b0b4b8"/></svg>
<div class="t" id="w41" style="left:204px;top:313.5px;font-size:10px;color:#c4c8ce;transform:scaleX(0.700);transform-origin:0 0;-webkit-text-stroke:0.3px #c4c8ce;">オート</div>
<svg style="left:228px;top:315px" width="8" height="5"><path d="M0 0 L7.5 0 L3.75 4.5 Z" fill="#b0b4b8"/></svg>
<div class="t" id="w42" style="left:245px;top:313.5px;font-size:10px;color:#c4c8ce;transform:scaleX(0.759);transform-origin:0 0;-webkit-text-stroke:0.3px #c4c8ce;">イン...</div>
<div style="left:243px;top:323px;width:42px;height:2px;background:#7b7f85;"></div>
<svg style="left:273px;top:315px" width="8" height="5"><path d="M0 0 L7.5 0 L3.75 4.5 Z" fill="#b0b4b8"/></svg>
<div class="t" id="w43" style="left:297px;top:313.5px;font-size:10px;color:#c4c8ce;transform:scaleX(0.746);transform-origin:0 0;-webkit-text-stroke:0.3px #c4c8ce;">テイク 1</div>
<div style="left:295px;top:323px;width:83px;height:2px;background:#7b7f85;"></div>
<svg style="left:366px;top:315px" width="8" height="5"><path d="M0 0 L7.5 0 L3.75 4.5 Z" fill="#b0b4b8"/></svg>
<svg style="left:192px;top:335px" width="5" height="7"><path d="M0 0 L4.5 3.5 L0 7 Z" fill="#151515"/></svg>
<div style="left:459px;top:287px;width:8px;height:6px;background:#2a2c30;border:1px solid #1a1a1a;"></div>
<div style="left:459px;top:293px;width:8px;height:52px;background:#2a2c30;border:1px solid #1a1a1a;"></div>
<div style="left:462.5px;top:287px;width:1px;height:58px;background:#1a1a1a;"></div>
<div style="left:460px;top:319px;width:2.5px;height:25px;background:#84b2fa;"></div>
<div style="left:463.5px;top:319px;width:2.5px;height:25px;background:#84b2fa;"></div>
<div style="left:460px;top:316px;width:2.5px;height:1px;background:#e0c040;"></div>
<div style="left:463.5px;top:316px;width:2.5px;height:1px;background:#e0c040;"></div>
<div class="t" style="left:480px;top:290.5px;font-size:10px;color:#c4ccd8;width:30px;text-align:right;">0</div>
<div style="left:512px;top:293px;width:4px;height:1px;background:#45484e;"></div>
<div class="t" style="left:480px;top:304.5px;font-size:10px;color:#c4ccd8;width:30px;text-align:right;">-6</div>
<div style="left:512px;top:307px;width:4px;height:1px;background:#45484e;"></div>
<div class="t" style="left:480px;top:316px;font-size:10px;color:#c4ccd8;width:30px;text-align:right;">-12</div>
<div style="left:512px;top:318px;width:4px;height:1px;background:#45484e;"></div>
<div class="t" style="left:480px;top:327.8px;font-size:10px;color:#c4ccd8;width:30px;text-align:right;">-24</div>
<div style="left:512px;top:330.5px;width:4px;height:1px;background:#45484e;"></div>
<div style="left:512px;top:274px;width:4.5px;height:72px;background:rgba(0,0,0,0.06);"></div>
<svg style="left:189px;top:353px" width="10" height="9"><path d="M1 0.5 L1 8.5 M2 4.5 L9.5 4.5 M3.5 2 L3.5 7 M5.5 3 L5.5 6 M7.5 2.5 L7.5 6.5" stroke="#8ee0a0" stroke-width="1.2"/></svg>
<div class="t" id="w44" style="left:200px;top:352px;font-size:10px;color:#a4eab4;transform:scaleX(0.679);transform-origin:0 0;-webkit-text-stroke-width:0.25px;">オーディオ-2</div>
<svg style="left:401px;top:353px" width="8" height="9"><path d="M0 3 L3 3 L6.5 0 L6.5 9 L3 6 L0 6 Z" fill="#2c3c5c"/></svg>
<svg style="left:414px;top:352.5px" width="8" height="9"><path d="M0 0 L8 4.5 L0 9 Z" fill="#3ee59e"/></svg>
<div style="left:428px;top:353.5px;width:7.5px;height:7.5px;background:#8b3a3a;border-radius:50%;"></div>
<div style="left:440.5px;top:353.0px;width:11px;height:1.3px;background:#2f3237;"></div>
<div style="left:440.5px;top:355.2px;width:11px;height:1.3px;background:#2f3237;"></div>
<div style="left:440.5px;top:357.4px;width:11px;height:1.3px;background:#2f3237;"></div>
<div style="left:440.5px;top:359.6px;width:11px;height:1.3px;background:#2f3237;"></div>
<svg style="left:462px;top:352px" width="5" height="7"><path d="M0 0 L4.5 3.5 L0 7 Z" fill="#151515"/></svg>
<svg style="left:484px;top:351px" width="11" height="11"><circle cx="4.5" cy="4.5" r="3.2" fill="none" stroke="#2f3237" stroke-width="1.6"/><path d="M6.8 6.8 L10 10" stroke="#2f3237" stroke-width="1.8"/></svg>
<div class="t" id="w45" style="left:204px;top:371.5px;font-size:10px;color:#c4c8ce;transform:scaleX(0.743);transform-origin:0 0;-webkit-text-stroke:0.3px #c4c8ce;">サウンドバイト</div>
<div style="left:202px;top:381px;width:83px;height:2px;background:#7b7f85;"></div>
<svg style="left:273px;top:373px" width="8" height="5"><path d="M0 0 L7.5 0 L3.75 4.5 Z" fill="#b0b4b8"/></svg>
<div class="t" id="w46" style="left:297px;top:371.5px;font-size:10px;color:#c4c8ce;transform:scaleX(0.966);transform-origin:0 0;-webkit-text-stroke:0.3px #c4c8ce;"><b>I</b>&nbsp; Loopback 1</div>
<div style="left:295px;top:381px;width:83px;height:2px;background:#7b7f85;"></div>
<svg style="left:366px;top:373px" width="8" height="5"><path d="M0 0 L7.5 0 L3.75 4.5 Z" fill="#b0b4b8"/></svg>
<div class="t" id="w47" style="left:204px;top:389.5px;font-size:10px;color:#c4c8ce;transform:scaleX(1.022);transform-origin:0 0;-webkit-text-stroke:0.3px #c4c8ce;"><b>O</b> Monitor 1-2</div>
<div style="left:202px;top:399px;width:83px;height:2px;background:#7b7f85;"></div>
<svg style="left:273px;top:391px" width="8" height="5"><path d="M0 0 L7.5 0 L3.75 4.5 Z" fill="#b0b4b8"/></svg>
<div class="t" id="w48" style="left:297px;top:389.5px;font-size:10px;color:#c4c8ce;transform:scaleX(0.700);transform-origin:0 0;-webkit-text-stroke:0.3px #c4c8ce;">オート</div>
<svg style="left:321px;top:391px" width="8" height="5"><path d="M0 0 L7.5 0 L3.75 4.5 Z" fill="#b0b4b8"/></svg>
<div class="t" id="w49" style="left:338px;top:389.5px;font-size:10px;color:#c4c8ce;transform:scaleX(0.706);transform-origin:0 0;-webkit-text-stroke:0.3px #c4c8ce;">イン...</div>
<div style="left:336px;top:399px;width:42px;height:2px;background:#7b7f85;"></div>
<svg style="left:366px;top:391px" width="8" height="5"><path d="M0 0 L7.5 0 L3.75 4.5 Z" fill="#b0b4b8"/></svg>
<div class="t" id="w50" style="left:204px;top:407.5px;font-size:10px;color:#c4c8ce;transform:scaleX(0.756);transform-origin:0 0;-webkit-text-stroke:0.3px #c4c8ce;">テイク 1</div>
<div style="left:202px;top:417px;width:83px;height:2px;background:#7b7f85;"></div>
<svg style="left:273px;top:409px" width="8" height="5"><path d="M0 0 L7.5 0 L3.75 4.5 Z" fill="#b0b4b8"/></svg>
<div class="t" id="w51" style="left:295px;top:406px;font-size:9px;color:#f0f0f0;transform:scaleX(0.810);transform-origin:0 0;font-weight:bold;">トランスポーズ</div>
<div style="left:349.5px;top:406.5px;width:10px;height:10px;background:#5c6068;border:1px solid #2a2c30;border-radius:2px;"></div>
<div style="left:363px;top:406.5px;width:17px;height:11.5px;background:#44474d;"></div>
<div class="t" style="left:369px;top:408px;font-size:10px;color:#f0f0f0;">0</div>
<div class="t" id="w52" style="left:203px;top:425px;font-size:9px;color:#f0f0f0;transform:scaleX(0.756);transform-origin:0 0;font-weight:bold;">ナチューン</div>
<div style="left:256.5px;top:425px;width:10px;height:10px;background:#5c6068;border:1px solid #2a2c30;border-radius:2px;"></div>
<div style="left:270px;top:424px;width:17.5px;height:11.5px;background:#44474d;"></div>
<div class="t" style="left:276px;top:426px;font-size:10px;color:#f0f0f0;">0</div>
<svg style="left:192px;top:588px" width="5" height="7"><path d="M0 0 L4.5 3.5 L0 7 Z" fill="#151515"/></svg>
<div style="left:459px;top:362px;width:8px;height:5px;background:#2a2c30;border:1px solid #1a1a1a;"></div>
<div style="left:459px;top:367px;width:8px;height:231px;background:#2a2c30;border:1px solid #1a1a1a;"></div>
<div style="left:462.5px;top:362px;width:1px;height:236px;background:#1a1a1a;"></div>
<div style="left:460px;top:437px;width:2.5px;height:160px;background:#84b2fa;"></div>
<div style="left:463.5px;top:437px;width:2.5px;height:160px;background:#84b2fa;"></div>
<div style="left:460px;top:426px;width:2.5px;height:1px;background:#e0c040;"></div>
<div style="left:463.5px;top:426px;width:2.5px;height:1px;background:#e0c040;"></div>
<div style="left:489px;top:363px;width:4px;height:232px;background:#303134;"></div>
<div style="left:490px;top:476px;width:2px;height:3px;background:#7a7e84;"></div>
<div style="left:180px;top:451px;width:2.5px;height:2.5px;background:#7e8288;border-radius:50%;"></div>
<div style="left:180px;top:457px;width:2.5px;height:2.5px;background:#7e8288;border-radius:50%;"></div>
<div style="left:517px;top:348px;width:491px;height:14px;background:#2f6a3a;"></div>
<div style="left:517px;top:362px;width:491px;height:1px;background:#68b878;"></div>
<div style="left:517px;top:363px;width:491px;height:234px;background:#4ea862;"></div>
<svg style="left:517px;top:363px" width="491" height="234"><polygon points="0,19 1,19 1,47 2,47 2,20 3,20 3,32 4,32 4,1 5,1 5,40 6,40 6,61 7,61 7,36 8,36 8,13 9,13 9,24 10,24 10,18 11,18 11,63 12,63 12,39 13,39 13,44 14,44 14,51 15,51 15,33 16,33 16,23 17,23 17,46 18,46 18,36 19,36 19,31 20,31 20,27 21,27 21,56 22,56 22,23 23,23 23,49 24,49 24,47 25,47 25,47 26,47 26,72 27,72 27,52 28,52 28,59 29,59 29,56 30,56 30,47 31,47 31,14 32,14 32,44 33,44 33,30 34,30 34,49 35,49 35,1 36,1 36,53 37,53 37,48 38,48 38,55 39,55 39,29 40,29 40,45 41,45 41,22 42,22 42,46 43,46 43,49 44,49 44,78 45,78 45,57 46,57 46,52 47,52 47,14 48,14 48,67 49,67 49,65 50,65 50,62 51,62 51,57 52,57 52,56 53,56 53,53 54,53 54,61 55,61 55,41 56,41 56,31 57,31 57,57 58,57 58,45 59,45 59,61 60,61 60,50 61,50 61,43 62,43 62,37 63,37 63,28 64,28 64,53 65,53 65,45 66,45 66,53 67,53 67,58 68,58 68,58 69,58 69,19 70,19 70,19 71,19 71,42 72,42 72,61 73,61 73,54 74,54 74,39 75,39 75,52 76,52 76,48 77,48 77,30 78,30 78,52 79,52 79,27 80,27 80,51 81,51 81,30 82,30 82,41 83,41 83,51 84,51 84,49 85,49 85,47 86,47 86,17 87,17 87,49 88,49 88,24 89,24 89,43 90,43 90,29 91,29 91,46 92,46 92,53 93,53 93,24 94,24 94,52 95,52 95,48 96,48 96,66 97,66 97,43 98,43 98,55 99,55 99,50 100,50 100,31 101,31 101,20 102,20 102,43 103,43 103,45 104,45 104,2 105,2 105,17 106,17 106,77 107,77 107,64 108,64 108,41 109,41 109,56 110,56 110,30 111,30 111,48 112,48 112,24 113,24 113,27 114,27 114,47 115,47 115,21 116,21 116,40 117,40 117,60 118,60 118,46 119,46 119,49 120,49 120,43 121,43 121,36 122,36 122,23 123,23 123,41 124,41 124,62 125,62 125,49 126,49 126,45 127,45 127,5 128,5 128,68 129,68 129,45 130,45 130,53 131,53 131,36 132,36 132,59 133,59 133,50 134,50 134,52 135,52 135,40 136,40 136,23 137,23 137,50 138,50 138,32 139,32 139,48 140,48 140,3 141,3 141,41 142,41 142,54 143,54 143,55 144,55 144,57 145,57 145,61 146,61 146,42 147,42 147,21 148,21 148,32 149,32 149,38 150,38 150,35 151,35 151,49 152,49 152,44 153,44 153,44 154,44 154,49 155,49 155,43 156,43 156,28 157,28 157,35 158,35 158,52 159,52 159,23 160,23 160,40 161,40 161,52 162,52 162,1 163,1 163,36 164,36 164,18 165,18 165,56 166,56 166,29 167,29 167,50 168,50 168,43 169,43 169,11 170,11 170,62 171,62 171,42 172,42 172,42 173,42 173,50 174,50 174,34 175,34 175,40 176,40 176,36 177,36 177,61 178,61 178,44 179,44 179,21 180,21 180,44 181,44 181,65 182,65 182,49 183,49 183,46 184,46 184,42 185,42 185,10 186,10 186,35 187,35 187,53 188,53 188,20 189,20 189,37 190,37 190,11 191,11 191,37 192,37 192,58 193,58 193,3 194,3 194,53 195,53 195,37 196,37 196,45 197,45 197,67 198,67 198,62 199,62 199,43 200,43 200,46 201,46 201,48 202,48 202,7 203,7 203,60 204,60 204,14 205,14 205,49 206,49 206,33 207,33 207,70 208,70 208,49 209,49 209,62 210,62 210,34 211,34 211,53 212,53 212,42 213,42 213,42 214,42 214,53 215,53 215,48 216,48 216,48 217,48 217,39 218,39 218,45 219,45 219,41 220,41 220,47 221,47 221,29 222,29 222,50 223,50 223,38 224,38 224,45 225,45 225,41 226,41 226,12 227,12 227,52 228,52 228,54 229,54 229,53 230,53 230,34 231,34 231,27 232,27 232,52 233,52 233,20 234,20 234,37 235,37 235,68 236,68 236,82 237,82 237,73 238,73 238,72 239,72 239,85 240,85 240,90 241,90 241,72 242,72 242,33 243,33 243,81 244,81 244,72 245,72 245,72 246,72 246,58 247,58 247,40 248,40 248,53 249,53 249,58 250,58 250,64 251,64 251,63 252,63 252,83 253,83 253,63 254,63 254,46 255,46 255,36 256,36 256,48 257,48 257,57 258,57 258,50 259,50 259,50 260,50 260,62 261,62 261,48 262,48 262,68 263,68 263,71 264,71 264,18 265,18 265,50 266,50 266,60 267,60 267,14 268,14 268,37 269,37 269,59 270,59 270,53 271,53 271,50 272,50 272,55 273,55 273,43 274,43 274,52 275,52 275,43 276,43 276,40 277,40 277,54 278,54 278,44 279,44 279,55 280,55 280,30 281,30 281,40 282,40 282,53 283,53 283,54 284,54 284,57 285,57 285,43 286,43 286,70 287,70 287,34 288,34 288,25 289,25 289,47 290,47 290,32 291,32 291,3 292,3 292,27 293,27 293,38 294,38 294,40 295,40 295,47 296,47 296,31 297,31 297,26 298,26 298,33 299,33 299,27 300,27 300,21 301,21 301,43 302,43 302,38 303,38 303,36 304,36 304,46 305,46 305,30 306,30 306,40 307,40 307,41 308,41 308,65 309,65 309,15 310,15 310,21 311,21 311,35 312,35 312,38 313,38 313,13 314,13 314,29 315,29 315,62 316,62 316,46 317,46 317,81 318,81 318,20 319,20 319,66 320,66 320,16 321,16 321,48 322,48 322,51 323,51 323,52 324,52 324,16 325,16 325,14 326,14 326,43 327,43 327,6 328,6 328,45 329,45 329,49 330,49 330,55 331,55 331,36 332,36 332,42 333,42 333,39 334,39 334,44 335,44 335,38 336,38 336,29 337,29 337,6 338,6 338,28 339,28 339,40 340,40 340,19 341,19 341,44 342,44 342,40 343,40 343,6 344,6 344,48 345,48 345,47 346,47 346,1 347,1 347,49 348,49 348,52 349,52 349,38 350,38 350,33 351,33 351,45 352,45 352,66 353,66 353,33 354,33 354,34 355,34 355,27 356,27 356,31 357,31 357,42 358,42 358,28 359,28 359,19 360,19 360,39 361,39 361,40 362,40 362,37 363,37 363,37 364,37 364,36 365,36 365,21 366,21 366,34 367,34 367,23 368,23 368,35 369,35 369,17 370,17 370,42 371,42 371,39 372,39 372,37 373,37 373,42 374,42 374,53 375,53 375,42 376,42 376,56 377,56 377,40 378,40 378,29 379,29 379,50 380,50 380,50 381,50 381,58 382,58 382,46 383,46 383,38 384,38 384,54 385,54 385,66 386,66 386,56 387,56 387,60 388,60 388,52 389,52 389,52 390,52 390,42 391,42 391,58 392,58 392,55 393,55 393,36 394,36 394,24 395,24 395,54 396,54 396,79 397,79 397,65 398,65 398,41 399,41 399,64 400,64 400,47 401,47 401,34 402,34 402,23 403,23 403,44 404,44 404,57 405,57 405,56 406,56 406,14 407,14 407,29 408,29 408,20 409,20 409,62 410,62 410,50 411,50 411,32 412,32 412,51 413,51 413,50 414,50 414,56 415,56 415,42 416,42 416,50 417,50 417,72 418,72 418,11 419,11 419,61 420,61 420,29 421,29 421,50 422,50 422,59 423,59 423,48 424,48 424,24 425,24 425,56 426,56 426,12 427,12 427,64 428,64 428,39 429,39 429,45 430,45 430,54 431,54 431,49 432,49 432,44 433,44 433,22 434,22 434,14 435,14 435,44 436,44 436,40 437,40 437,43 438,43 438,40 439,40 439,10 440,10 440,37 441,37 441,67 442,67 442,67 443,67 443,41 444,41 444,32 445,32 445,56 446,56 446,42 447,42 447,44 448,44 448,21 449,21 449,37 450,37 450,25 451,25 451,19 452,19 452,30 453,30 453,29 454,29 454,31 455,31 455,37 456,37 456,31 457,31 457,42 458,42 458,44 459,44 459,44 460,44 460,25 461,25 461,40 462,40 462,42 463,42 463,39 464,39 464,48 465,48 465,51 466,51 466,47 467,47 467,48 468,48 468,36 469,36 469,46 470,46 470,49 471,49 471,6 472,6 472,54 473,54 473,47 474,47 474,4 475,4 475,28 476,28 476,68 477,68 477,53 478,53 478,54 479,54 479,50 480,50 480,42 481,42 481,37 482,37 482,41 483,41 483,57 484,57 484,64 485,64 485,59 486,59 486,57 487,57 487,59 488,59 488,49 489,49 489,44 490,44 490,23 491,23 491,183 490,183 490,204 489,204 489,232 488,232 488,191 487,191 487,204 486,204 486,202 485,202 485,164 484,164 484,171 483,171 483,204 482,204 482,177 481,177 481,203 480,203 480,190 479,190 479,202 478,202 478,193 477,193 477,179 476,179 476,185 475,185 475,182 474,182 474,181 473,181 473,217 472,217 472,192 471,192 471,182 470,182 470,182 469,182 469,174 468,174 468,167 467,167 467,203 466,203 466,217 465,217 465,197 464,197 464,227 463,227 463,188 462,188 462,179 461,179 461,197 460,197 460,194 459,194 459,195 458,195 458,175 457,175 457,202 456,202 456,194 455,194 455,181 454,181 454,186 453,186 453,180 452,180 452,188 451,188 451,189 450,189 450,160 449,160 449,183 448,183 448,203 447,203 447,188 446,188 446,185 445,185 445,179 444,179 444,166 443,166 443,175 442,175 442,175 441,175 441,198 440,198 440,189 439,189 439,205 438,205 438,222 437,222 437,198 436,198 436,231 435,231 435,203 434,203 434,186 433,186 433,180 432,180 432,176 431,176 431,201 430,201 430,180 429,180 429,176 428,176 428,181 427,181 427,186 426,186 426,191 425,191 425,177 424,177 424,205 423,205 423,187 422,187 422,191 421,191 421,232 420,232 420,221 419,221 419,188 418,188 418,194 417,194 417,168 416,168 416,186 415,186 415,181 414,181 414,218 413,218 413,204 412,204 412,205 411,205 411,182 410,182 410,154 409,154 409,185 408,185 408,188 407,188 407,183 406,183 406,210 405,210 405,204 404,204 404,190 403,190 403,163 402,163 402,194 401,194 401,192 400,192 400,182 399,182 399,207 398,207 398,207 397,207 397,187 396,187 396,183 395,183 395,180 394,180 394,184 393,184 393,186 392,186 392,227 391,227 391,162 390,162 390,164 389,164 389,184 388,184 388,188 387,188 387,197 386,197 386,225 385,225 385,191 384,191 384,206 383,206 383,183 382,183 382,192 381,192 381,186 380,186 380,211 379,211 379,222 378,222 378,190 377,190 377,189 376,189 376,204 375,204 375,184 374,184 374,193 373,193 373,213 372,213 372,202 371,202 371,193 370,193 370,187 369,187 369,192 368,192 368,194 367,194 367,190 366,190 366,209 365,209 365,193 364,193 364,221 363,221 363,183 362,183 362,208 361,208 361,183 360,183 360,185 359,185 359,220 358,220 358,168 357,168 357,194 356,194 356,178 355,178 355,225 354,225 354,217 353,217 353,190 352,190 352,205 351,205 351,174 350,174 350,211 349,211 349,162 348,162 348,191 347,191 347,198 346,198 346,203 345,203 345,191 344,191 344,200 343,200 343,189 342,189 342,188 341,188 341,182 340,182 340,209 339,209 339,171 338,171 338,196 337,196 337,183 336,183 336,167 335,167 335,178 334,178 334,186 333,186 333,184 332,184 332,201 331,201 331,213 330,213 330,176 329,176 329,197 328,197 328,192 327,192 327,180 326,180 326,178 325,178 325,164 324,164 324,181 323,181 323,194 322,194 322,180 321,180 321,193 320,193 320,210 319,210 319,184 318,184 318,214 317,214 317,225 316,225 316,189 315,189 315,169 314,169 314,197 313,197 313,220 312,220 312,176 311,176 311,218 310,218 310,152 309,152 309,181 308,181 308,190 307,190 307,197 306,197 306,206 305,206 305,191 304,191 304,188 303,188 303,192 302,192 302,180 301,180 301,193 300,193 300,195 299,195 299,198 298,198 298,216 297,216 297,188 296,188 296,190 295,190 295,196 294,196 294,194 293,194 293,194 292,194 292,191 291,191 291,219 290,219 290,169 289,169 289,192 288,192 288,179 287,179 287,181 286,181 286,192 285,192 285,208 284,208 284,210 283,210 283,191 282,191 282,188 281,188 281,202 280,202 280,186 279,186 279,190 278,190 278,182 277,182 277,212 276,212 276,185 275,185 275,172 274,172 274,184 273,184 273,217 272,217 272,171 271,171 271,160 270,160 270,174 269,174 269,196 268,196 268,195 267,195 267,186 266,186 266,192 265,192 265,204 264,204 264,206 263,206 263,183 262,183 262,193 261,193 261,178 260,178 260,212 259,212 259,182 258,182 258,194 257,194 257,174 256,174 256,201 255,201 255,191 254,191 254,199 253,199 253,174 252,174 252,181 251,181 251,193 250,193 250,190 249,190 249,180 248,180 248,176 247,176 247,186 246,186 246,148 245,148 245,158 244,158 244,186 243,186 243,168 242,168 242,192 241,192 241,177 240,177 240,162 239,162 239,191 238,191 238,176 237,176 237,177 236,177 236,184 235,184 235,197 234,197 234,179 233,179 233,185 232,185 232,205 231,205 231,190 230,190 230,179 229,179 229,193 228,193 228,186 227,186 227,197 226,197 226,180 225,180 225,176 224,176 224,207 223,207 223,179 222,179 222,199 221,199 221,196 220,196 220,200 219,200 219,199 218,199 218,172 217,172 217,166 216,166 216,193 215,193 215,174 214,174 214,189 213,189 213,188 212,188 212,207 211,207 211,154 210,154 210,183 209,183 209,211 208,211 208,170 207,170 207,204 206,204 206,193 205,193 205,182 204,182 204,169 203,169 203,186 202,186 202,180 201,180 201,183 200,183 200,165 199,165 199,204 198,204 198,173 197,173 197,171 196,171 196,183 195,183 195,191 194,191 194,207 193,207 193,197 192,197 192,196 191,196 191,176 190,176 190,212 189,212 189,192 188,192 188,202 187,202 187,202 186,202 186,209 185,209 185,229 184,229 184,203 183,203 183,180 182,180 182,197 181,197 181,191 180,191 180,188 179,188 179,186 178,186 178,181 177,181 177,158 176,158 176,164 175,164 175,184 174,184 174,201 173,201 173,185 172,185 172,175 171,175 171,197 170,197 170,188 169,188 169,180 168,180 168,199 167,199 167,184 166,184 166,197 165,197 165,203 164,203 164,186 163,186 163,149 162,149 162,184 161,184 161,170 160,170 160,210 159,210 159,174 158,174 158,202 157,202 157,153 156,153 156,210 155,210 155,181 154,181 154,186 153,186 153,180 152,180 152,174 151,174 151,200 150,200 150,191 149,191 149,176 148,176 148,179 147,179 147,166 146,166 146,173 145,173 145,177 144,177 144,170 143,170 143,176 142,176 142,179 141,179 141,173 140,173 140,183 139,183 139,183 138,183 138,180 137,180 137,170 136,170 136,178 135,178 135,214 134,214 134,171 133,171 133,200 132,200 132,201 131,201 131,205 130,205 130,170 129,170 129,171 128,171 128,175 127,175 127,185 126,185 126,178 125,178 125,187 124,187 124,218 123,218 123,192 122,192 122,166 121,166 121,187 120,187 120,178 119,178 119,201 118,201 118,185 117,185 117,185 116,185 116,174 115,174 115,181 114,181 114,174 113,174 113,151 112,151 112,197 111,197 111,172 110,172 110,176 109,176 109,200 108,200 108,210 107,210 107,189 106,189 106,199 105,199 105,178 104,178 104,163 103,163 103,203 102,203 102,175 101,175 101,183 100,183 100,186 99,186 99,194 98,194 98,194 97,194 97,181 96,181 96,232 95,232 95,185 94,185 94,191 93,191 93,179 92,179 92,151 91,151 91,209 90,209 90,155 89,155 89,192 88,192 88,180 87,180 87,189 86,189 86,180 85,180 85,186 84,186 84,195 83,195 83,193 82,193 82,192 81,192 81,183 80,183 80,182 79,182 79,192 78,192 78,189 77,189 77,212 76,212 76,191 75,191 75,178 74,178 74,183 73,183 73,178 72,178 72,197 71,197 71,188 70,188 70,181 69,181 69,195 68,195 68,191 67,191 67,150 66,150 66,183 65,183 65,176 64,176 64,175 63,175 63,166 62,166 62,207 61,207 61,175 60,175 60,186 59,186 59,175 58,175 58,192 57,192 57,192 56,192 56,172 55,172 55,216 54,216 54,173 53,173 53,186 52,186 52,163 51,163 51,168 50,168 50,200 49,200 49,171 48,171 48,182 47,182 47,178 46,178 46,180 45,180 45,180 44,180 44,189 43,189 43,186 42,186 42,200 41,200 41,178 40,178 40,180 39,180 39,182 38,182 38,181 37,181 37,148 36,148 36,199 35,199 35,182 34,182 34,207 33,207 33,179 32,179 32,202 31,202 31,173 30,173 30,183 29,183 29,175 28,175 28,175 27,175 27,166 26,166 26,167 25,167 25,192 24,192 24,180 23,180 23,182 22,182 22,180 21,180 21,187 20,187 20,194 19,194 19,218 18,218 18,198 17,198 17,192 16,192 16,179 15,179 15,182 14,182 14,178 13,178 13,196 12,196 12,193 11,193 11,198 10,198 10,191 9,191 9,199 8,199 8,205 7,205 7,193 6,193 6,190 5,190 5,189 4,189 4,186 3,186 3,187 2,187 2,156 1,156 1,206 0,206" fill="#e6fbe8"/></svg>
<div style="left:516px;top:597px;width:492px;height:2px;background:#1c1d20;"></div>
<div style="left:516px;top:599px;width:492px;height:2px;background:#9098a8;"></div>
<svg style="left:769px;top:137px" width="16" height="17"><path d="M0.5 0 L15 0 L7.75 16.5 Z" fill="#c8c8c8"/><rect x="7" y="0" width="1.4" height="17" fill="#3a3c40"/></svg>
<div style="left:776px;top:154px;width:2px;height:591px;background:#f4f4f4;"></div>
<div style="left:1008px;top:196px;width:16px;height:519px;background:#585c63;"></div>
<div style="left:1008px;top:196px;width:1px;height:519px;background:#3a3d42;"></div>
<svg style="left:1012px;top:199px" width="8" height="7"><path d="M0 6 L4 0 L8 6 Z" fill="#484b50"/></svg>
<svg style="left:1013px;top:706px" width="8" height="7"><path d="M0 0 L8 0 L4 6 Z" fill="#484b50"/></svg>
<div style="left:1012px;top:722px;width:8px;height:2px;background:#2a2c30;"></div>
<div style="left:1015px;top:719px;width:2px;height:8px;background:#2a2c30;"></div>
<div style="left:1012px;top:737px;width:8px;height:2px;background:#2a2c30;"></div>
<div style="left:216px;top:744px;width:793px;height:1px;background:#3a3d42;"></div>
<div style="left:185px;top:745px;width:839px;height:14px;background:#575b62;"></div>
<svg style="left:188px;top:746px" width="11" height="11"><rect x="0.5" y="0.5" width="10" height="10" fill="#84b2fa"/><rect x="0" y="2" width="11" height="1" fill="#52565d"/><rect x="4.5" y="3" width="1" height="8" fill="#52565d"/></svg>
<svg style="left:203px;top:746px" width="12" height="11"><path d="M0 3 L3 3 L4 1 L8 1 L9 3 L12 3 L12 11 L0 11 Z" fill="#333539"/><circle cx="6" cy="6.5" r="2" fill="#575b62"/></svg>
<svg style="left:219px;top:749px" width="6" height="7"><path d="M6 0 L0 3.5 L6 7 Z" fill="#222"/></svg>
<div style="left:478px;top:747px;width:29px;height:8px;background:#333539;border-radius:4px;"></div>
<svg style="left:970px;top:749px" width="6" height="7"><path d="M0 0 L6 3.5 L0 7 Z" fill="#222"/></svg>
<div style="left:983px;top:751px;width:8px;height:2px;background:#2a2c30;"></div>
<div style="left:998px;top:751px;width:8px;height:2px;background:#2a2c30;"></div>
<div style="left:1001px;top:748px;width:2px;height:8px;background:#2a2c30;"></div>
<div style="left:606px;top:762px;width:3px;height:3px;background:#6e7278;border-radius:50%;"></div>
<div style="left:612px;top:762px;width:3px;height:3px;background:#6e7278;border-radius:50%;"></div>
</body></html>
